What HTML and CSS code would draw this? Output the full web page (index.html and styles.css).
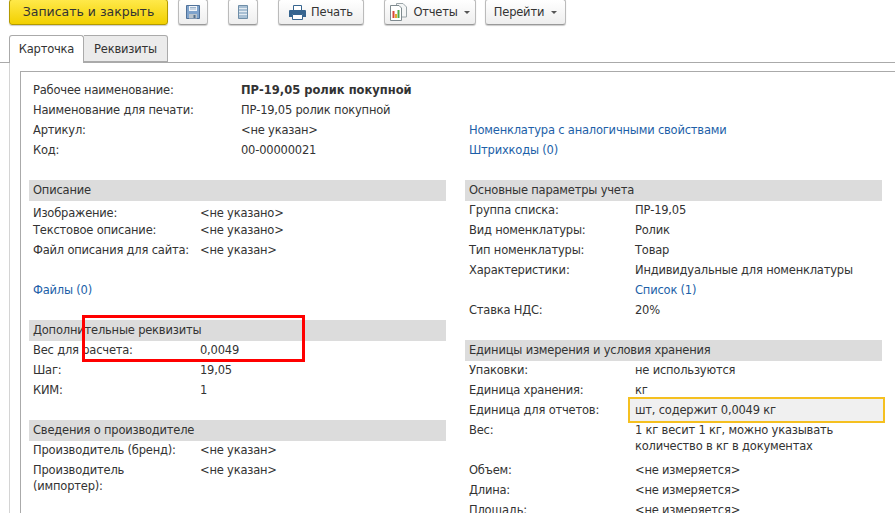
FILE: index.html
```html
<!DOCTYPE html>
<html lang="ru">
<head>
    <meta charset="UTF-8">
    <title>ПР-19,05 ролик покупной</title>
    <link rel="stylesheet" href="styles.css">
</head>
<body>
    <div class="toolbar">
        <button class="btn btn-main">Записать и закрыть</button>
        <button class="btn btn-icon btn-save">
            <svg width="14" height="14" viewBox="0 0 14 14"><path d="M.5.5h13v13H.5z" fill="#7fa3cc" stroke="#4f7199"/><path d="M3 1h8v5H3z" fill="#f2f5f9"/><path d="M4 2.500h6M4 4h6" stroke="#9db4cc"/><path d="M3 9h8v4.500H3z" fill="#b9c3cc"/><path d="M7.500 10h2v3h-2z" fill="#55708c"/></svg>
        </button>
        <button class="btn btn-icon btn-list">
            <svg width="10" height="14" viewBox="0 0 10 14"><path d="M.5.5h9v13h-9z" fill="#a9c0d4" stroke="#6f8ea8"/><path d="M1 3.500h8M1 6.500h8M1 9.500h8" stroke="#e3ebf2" stroke-width="1"/></svg>
        </button>
        <button class="btn btn-print">
            <svg width="17" height="15" viewBox="0 0 17 15"><path d="M4.500.5h8v5h-8z" fill="#fff" stroke="#36648f"/><path d="M1 5h15a1 1 0 0 1 1 1v6h-3V9.500H3V12H0V6a1 1 0 0 1 1-1z" fill="#36648f"/><path d="M3.500 9.500h10v5h-10z" fill="#fff" stroke="#36648f"/></svg>
            Печать
        </button>
        <button class="btn btn-reports">
            <svg width="17" height="18" viewBox="0 0 17 18"><path d="M6.500.5H13l3.500 3.500v10h-10z" fill="#f4f6f6" stroke="#9aa4a8"/><path d="M.5 2.500H9l2.500 2.500v12.500H.5z" fill="#fff" stroke="#7f8a8f"/><path d="M2.500 8h2v7h-2z" fill="#d8483a"/><path d="M5 11h2v4H5z" fill="#e2a92f"/><path d="M7.500 7H9.500v8h-2z" fill="#4fa84a"/></svg>
            <span>Отчеты</span><i class="caret"></i>
        </button>
        <button class="btn btn-go"><span>Перейти</span><i class="caret"></i></button>
    </div>

    <div class="tabs">
        <div class="tab tab-active">Карточка</div>
        <div class="tab">Реквизиты</div>
    </div>

    <div class="page">
        <div class="panel">
            <div class="head-grid">
                <div class="head-main">
                    <div class="row"><span class="k">Рабочее наименование:</span><b>ПР-19,05 ролик покупной</b></div>
                    <div class="row"><span class="k">Наименование для печати:</span><span>ПР-19,05 ролик покупной</span></div>
                    <div class="row"><span class="k">Артикул:</span><span>&lt;не указан&gt;</span></div>
                    <div class="row"><span class="k">Код:</span><span>00-00000021</span></div>
                </div>
                <div class="head-links">
                    <a class="row">Номенклатура с аналогичными свойствами</a>
                    <a class="row">Штрихкоды (0)</a>
                </div>
            </div>

            <div class="columns">
                <div class="col col-left">
                    <section class="group">
                        <h3>Описание</h3>
                        <div class="row row-first"><span class="k">Изображение:</span><span>&lt;не указано&gt;</span></div>
                        <div class="row"><span class="k">Текстовое описание:</span><span>&lt;не указано&gt;</span></div>
                        <div class="row"><span class="k">Файл описания для сайта:</span><span>&lt;не указан&gt;</span></div>
                        <a class="row row-files">Файлы (0)</a>
                    </section>
                    <section class="group">
                        <h3>Дополнительные реквизиты</h3>
                        <div class="row"><span class="k">Вес для расчета:</span><span>0,0049</span></div>
                        <div class="row"><span class="k">Шаг:</span><span>19,05</span></div>
                        <div class="row"><span class="k">КИМ:</span><span>1</span></div>
                    </section>
                    <section class="group">
                        <h3>Сведения о производителе</h3>
                        <div class="row"><span class="k">Производитель (бренд):</span><span>&lt;не указан&gt;</span></div>
                        <div class="row row-wrap"><span class="k">Производитель<br>(импортер):</span><span>&lt;не указан&gt;</span></div>
                    </section>
                    <div class="mark-red"></div>
                </div>

                <div class="col col-right">
                    <section class="group">
                        <h3>Основные параметры учета</h3>
                        <div class="row"><span class="k">Группа списка:</span><span>ПР-19,05</span></div>
                        <div class="row"><span class="k">Вид номенклатуры:</span><span>Ролик</span></div>
                        <div class="row"><span class="k">Тип номенклатуры:</span><span>Товар</span></div>
                        <div class="row"><span class="k">Характеристики:</span><span>Индивидуальные для номенклатуры</span></div>
                        <div class="row"><span class="k"></span><a>Список (1)</a></div>
                        <div class="row"><span class="k">Ставка НДС:</span><span>20%</span></div>
                    </section>
                    <section class="group">
                        <h3>Единицы измерения и условия хранения</h3>
                        <div class="row"><span class="k">Упаковки:</span><span>не используются</span></div>
                        <div class="row"><span class="k">Единица хранения:</span><span>кг</span></div>
                        <div class="row"><span class="k">Единица для отчетов:</span><span class="hl">шт, содержит 0,0049 кг</span></div>
                        <div class="row row-wrap"><span class="k">Вес:</span><span class="v-wrap">1 кг весит 1 кг, можно указывать количество в кг в документах</span></div>
                        <div class="row"><span class="k">Объем:</span><span>&lt;не измеряется&gt;</span></div>
                        <div class="row"><span class="k">Длина:</span><span>&lt;не измеряется&gt;</span></div>
                        <div class="row"><span class="k">Площадь:</span><span>&lt;не измеряется&gt;</span></div>
                    </section>
                </div>
            </div>
        </div>
    </div>
</body>
</html>
```

FILE: styles.css
```css
* {
    margin: 0;
    padding: 0;
    box-sizing: border-box;
}

html,
body {
    height: 100%;
    overflow: hidden;
}

body {
    background: #fff;
    color: #333;
    font: 11.5px/20px "DejaVu Sans", sans-serif;
    letter-spacing: -0.2px;
}

b {
    letter-spacing: 0;
}

/* верхняя панель */
.toolbar {
    height: 26px;
    margin-top: -1px;
    padding-left: 9px;
    display: flex;
}

.btn {
    display: flex;
    align-items: center;
    justify-content: center;
    height: 26px;
    color: #333;
    font: inherit;
    letter-spacing: inherit;
    background: linear-gradient(#fff, #eee);
    border: 1px solid #bbb;
    border-bottom-color: #999;
    border-radius: 3px;
    box-shadow: 0 1px 1px #ccc;
}

.btn-main {
    width: 159px;
    font-size: 12.5px;
    letter-spacing: 0;
    border-color: #b39a00;
    background: linear-gradient(#ffe94a, #f2d000);
}

.btn-icon {
    width: 30px;
}

.btn-save {
    margin-left: 10px;
}

.btn-list {
    margin-left: 20px;
}

.btn-print {
    width: 86px;
    gap: 5px;
    margin-left: 20px;
}

.btn-reports {
    width: 92px;
    gap: 6px;
    margin-left: 20px;
}

.btn-go {
    width: 81px;
    gap: 7px;
    margin-left: 9px;
}

.caret {
    width: 0;
    height: 0;
    border: 3.5px solid transparent;
    border-top: 3px solid #555;
    border-bottom: 0;
}

/* вкладки */
.tabs {
    height: 28px;
    margin-top: 10px;
    padding-left: 9px;
    display: flex;
    border-bottom: 1px solid #aaa;
}

.tab {
    width: 84px;
    height: 27px;
    line-height: 26px;
    text-align: center;
    background: #ebebeb;
    border: 1px solid #aaa;
    border-left: 0;
    border-radius: 0 3px 0 0;
}

.tab-active {
    width: 75px;
    height: 28px;
    background: #fff;
    border-left: 1px solid #aaa;
    border-bottom: 0;
    border-radius: 3px 3px 0 0;
}

/* содержимое */
.page {
    height: 451px;
    margin-left: 9px;
    padding: 8px 0 0 10px;
    border-left: 1px solid #d4d4d4;
}

.panel {
    height: 100%;
    padding: 8px 0 0 8px;
    border-top: 1px solid #aaa;
    border-left: 1px solid #aaa;
}

.head-grid {
    display: flex;
    padding-left: 4px;
}

.head-main {
    width: 436px;
}

.head-links {
    padding-top: 40px;
}

.row {
    display: flex;
    height: 20px;
}

a {
    color: #1d5fa8;
}

.k {
    flex: none;
}

.head-main .k {
    width: 208px;
}

.columns {
    display: flex;
    gap: 19px;
    margin-top: 20px;
}

.col {
    position: relative;
    width: 417px;
}

.group {
    padding-bottom: 20px;
}

.group h3 {
    height: 21px;
    margin-bottom: -1px;
    padding-left: 4px;
    font-size: inherit;
    font-weight: normal;
    background: #dcdcdc;
}

.group .row {
    padding-left: 4px;
}

.col-left .k {
    width: 167px;
}

.col-right .k {
    width: 166px;
}

.row-first {
    padding-top: 3px;
}

.row-files {
    margin-top: 20px;
}

.row-wrap {
    height: 40px;
    line-height: 16px;
    padding-top: 2px;
}

.v-wrap {
    width: 225px;
}

.hl {
    flex: 1;
    height: 26px;
    margin: -3px -3px 0 -7px;
    padding-left: 5px;
    line-height: 22px;
    background: #f0f0f0;
    border: 2px solid #f5c020;
}

/* пометка поверх формы */
.mark-red {
    position: absolute;
    left: 53px;
    top: 135px;
    width: 223px;
    height: 47px;
    border: 3px solid #f00;
}
```
